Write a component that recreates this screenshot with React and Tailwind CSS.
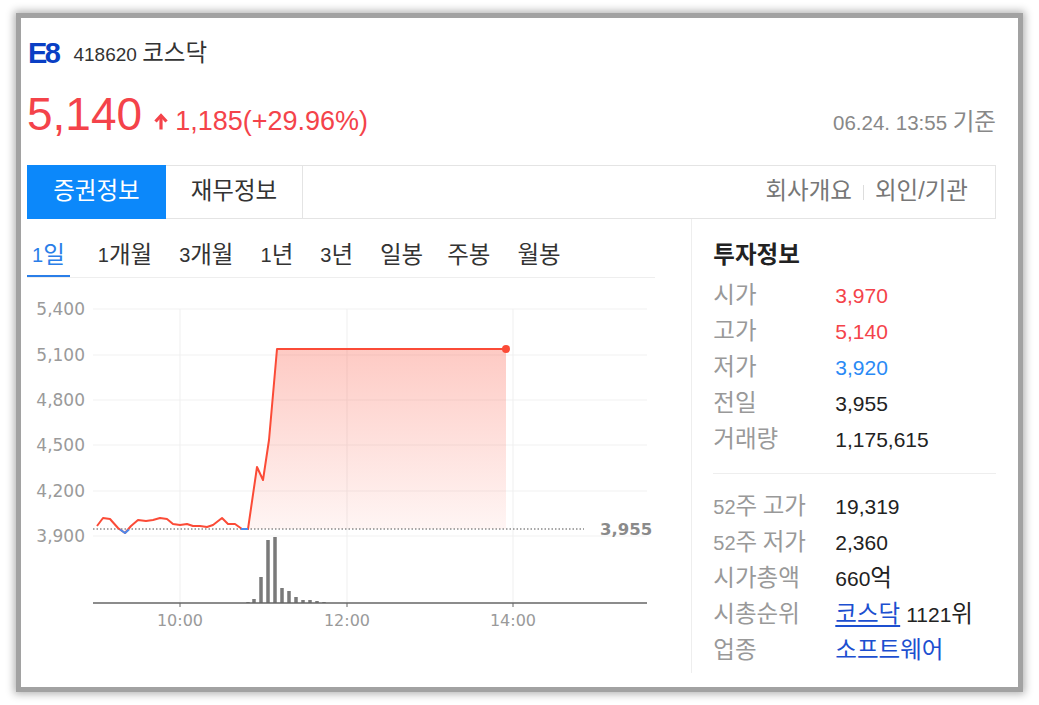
import { useState } from 'react';

const FONT = { fontFamily: '"Liberation Sans", "Noto Sans CJK KR", sans-serif' };
const CHART_FONT = { fontFamily: '"DejaVu Sans", "Noto Sans CJK KR", sans-serif' };

// Hangul runs are set larger than the latin digits, like the original page font
const ko = (s) =>
  s.split(/([가-힣]+)/).map((part, i) =>
    /[가-힣]/.test(part) ? <span key={i} className="text-[23.5px]">{part}</span> : part
  );

const periods = ['1일', '1개월', '3개월', '1년', '3년', '일봉', '주봉', '월봉'];

const pricePoints = [
  [97, 526], [103, 518], [110, 519], [118, 528], [125, 533], [131, 526], [138, 520],
  [146, 521], [153, 520], [160, 518], [167, 519], [173, 524], [180, 525], [187, 524],
  [193, 526], [200, 526], [207, 527], [213, 525], [222, 518], [228, 524], [235, 524],
  [242, 529], [248, 529], [257, 467], [263, 480], [269, 440], [277, 349], [506, 349],
];

const fillPoints = [[248, 529], [257, 467], [263, 480], [269, 440], [277, 349], [506, 349], [506, 529]];

const volumeBars = [
  [248, 602], [254, 599], [261, 577], [268, 540], [275, 537], [282, 588], [289, 591],
  [296, 597], [303, 600], [310, 600], [317, 601], [324, 602],
];

const yLabels = [
  ['5,400', 309], ['5,100', 355], ['4,800', 400], ['4,500', 445], ['4,200', 491], ['3,900', 536],
];

const timeLabels = [['10:00', 180], ['12:00', 347], ['14:00', 513]];

const info1 = [
  { label: '시가', value: '3,970', color: 'text-[#f4434a]' },
  { label: '고가', value: '5,140', color: 'text-[#f4434a]' },
  { label: '저가', value: '3,920', color: 'text-[#2a8af5]' },
  { label: '전일', value: '3,955', color: 'text-[#222]' },
  { label: '거래량', value: '1,175,615', color: 'text-[#222]' },
];

const info2 = [
  { label: '52주 고가', value: '19,319' },
  { label: '52주 저가', value: '2,360' },
  { label: '시가총액', value: '660억' },
];

const PriceChart = () => {
  const line = pricePoints.map(p => p.join(',')).join(' ');
  const fill = fillPoints.map(p => p.join(',')).join(' ');

  return (
    <svg width="640" height="362" viewBox="27 278 640 362" className="block">
      <defs>
        <linearGradient id="areaFill" x1="0" y1="0" x2="0" y2="1">
          <stop offset="0%" stopColor="#fb5a46" stopOpacity="0.32" />
          <stop offset="100%" stopColor="#fb5a46" stopOpacity="0.06" />
        </linearGradient>
      </defs>

      {/* grid */}
      {yLabels.map(([, y]) => (
        <line key={y} x1="93" x2="647" y1={y} y2={y} stroke="#f1f1f1" strokeWidth="1" />
      ))}
      {timeLabels.map(([, x]) => (
        <line key={x} x1={x} x2={x} y1="309" y2="603" stroke="#efefef" strokeWidth="1" />
      ))}

      {/* area + price line */}
      <polygon points={fill} fill="url(#areaFill)" />
      <line x1="93" x2="584" y1="529" y2="529" stroke="#8a8a8a" strokeWidth="1.5" strokeDasharray="1.5 2" />
      <polyline points={line} fill="none" stroke="#fb4b37" strokeWidth="2" strokeLinejoin="round" />
      <polyline points="120,529.5 125,533 129,529.5" fill="none" stroke="#4a8cf0" strokeWidth="2" strokeLinejoin="round" />
      <polyline points="241,529 248,529" fill="none" stroke="#4a8cf0" strokeWidth="2" />
      <circle cx="506" cy="349" r="4" fill="#fb4b37" />

      {/* volume */}
      {volumeBars.map(([x, top]) => (
        <rect key={x} x={x - 1.75} y={top} width="3.5" height={603 - top} fill="#7a7a7a" />
      ))}
      <line x1="93" x2="647" y1="603" y2="603" stroke="#666" strokeWidth="1.5" />
      {timeLabels.map(([, x]) => (
        <line key={`t${x}`} x1={x} x2={x} y1="603" y2="607" stroke="#666" strokeWidth="1" />
      ))}

      {/* labels */}
      <g style={CHART_FONT} fill="#9a9a9a">
        {yLabels.map(([t, y]) => (
          <text key={t} x="85" y={y + 6} fontSize="17" textAnchor="end">{t}</text>
        ))}
        {timeLabels.map(([t, x]) => (
          <text key={t} x={x} y="626" fontSize="16" textAnchor="middle">{t}</text>
        ))}
      </g>
      <text x="600" y="535" style={CHART_FONT} fontSize="16.5" fontWeight="bold" fill="#8a8a8a">3,955</text>
    </svg>
  );
};

export default function App() {
  const [period, setPeriod] = useState(0);

  return (
    <div className="min-h-screen bg-white pt-[13px] pl-[16px]" style={FONT}>
      <div className="w-[1007px] h-[679px] border-[5px] border-[#a2a2a2] bg-white pl-[6px] pr-[22px] shadow-[0_0_8px_2px_rgba(0,0,0,0.3)]">
        {/* name */}
        <div className="mt-[20px] h-[32px] flex items-center">
          <span className="ml-[1px] text-[29px] font-bold tracking-[-2.5px] text-[#0a3fc4]">E8</span>
          <span className="ml-[15px] text-[19px] text-[#333]">{ko('418620 코스닥')}</span>
        </div>

        {/* price */}
        <div className="mt-[18px] h-[52px] flex items-baseline justify-between">
          <div className="flex items-baseline text-[#f4434a]">
            <span className="text-[46px] leading-[52px]">5,140</span>
            <svg width="16" height="17" viewBox="0 0 16 17" className="ml-[11px] mr-[6px]">
              <path d="M8 16.5V3" stroke="#f4434a" strokeWidth="3.2" fill="none" />
              <path d="M2.5 8.5L8 2.5l5.5 6" stroke="#f4434a" strokeWidth="3.2" fill="none" />
            </svg>
            <span className="text-[27px]">1,185(+29.96%)</span>
          </div>
          <span className="text-[20.5px] text-[#888]">{ko('06.24. 13:55 기준')}</span>
        </div>

        {/* tabs */}
        <div className="mt-[25px] h-[54px] flex border-y border-r border-[#e4e4e4]">
          <div className="w-[139px] -my-px bg-[#0c88fa] text-white text-[23.5px] flex items-center justify-center">증권정보</div>
          <div className="w-[137px] border-r border-[#e4e4e4] text-[23.5px] text-[#333] flex items-center justify-center">재무정보</div>
          <div className="ml-auto pr-[27px] flex items-center text-[23.5px] text-[#777]">
            <span>회사개요</span>
            <span className="mx-[11px] w-px h-[15px] bg-[#ddd]" />
            <span>외인/기관</span>
          </div>
        </div>

        {/* body */}
        <div className="h-[454px] flex">
          <div className="w-[666px] border-r border-[#eee]">
            <div className="w-[628px] h-[59px] pt-[23px] flex items-start border-b border-[#eee]">
              {periods.map((p, i) => (
                <button
                  key={p}
                  onClick={() => setPeriod(i)}
                  className={`h-[35px] px-[5px] text-[20px] leading-[26px] flex items-start ${
                    i === 0 ? 'mr-[23px]' : i === 5 ? 'mr-[14px]' : 'mr-[17px]'
                  } ${period === i ? 'text-[#2a7ee8] border-b-2 border-[#2a7ee8]' : 'text-[#333]'}`}
                >
                  {ko(p)}
                </button>
              ))}
            </div>
            <PriceChart />
          </div>

          <div className="w-[304px] pl-[21px]">
            <div className="mt-[19px] h-[36px] flex items-center text-[23.5px] font-bold text-[#222]">투자정보</div>
            <div className="mt-[4px]">
              {info1.map(r => (
                <div key={r.label} className="h-[36px] flex items-center text-[21px]">
                  <span className="w-[122px] text-[20px] text-[#999]">{ko(r.label)}</span>
                  <span className={r.color}>{r.value}</span>
                </div>
              ))}
            </div>
            <div className="my-[15px] h-px bg-[#eee]" />
            {info2.map(r => (
              <div key={r.label} className="h-[36px] flex items-center text-[21px]">
                <span className="w-[122px] text-[20px] text-[#999]">{ko(r.label)}</span>
                <span className="text-[#222]">{ko(r.value)}</span>
              </div>
            ))}
            <div className="h-[36px] flex items-center text-[21px]">
              <span className="w-[122px] text-[23.5px] text-[#999]">시총순위</span>
              <a href="#" className="text-[23.5px] text-[#1c4fd0] underline underline-offset-[3px]">코스닥</a>
              <span className="ml-[6px] text-[#222]">{ko('1121위')}</span>
            </div>
            <div className="h-[36px] flex items-center text-[23.5px]">
              <span className="w-[122px] text-[#999]">업종</span>
              <a href="#" className="text-[#1c4fd0]">소프트웨어</a>
            </div>
          </div>
        </div>
      </div>
    </div>
  );
}
